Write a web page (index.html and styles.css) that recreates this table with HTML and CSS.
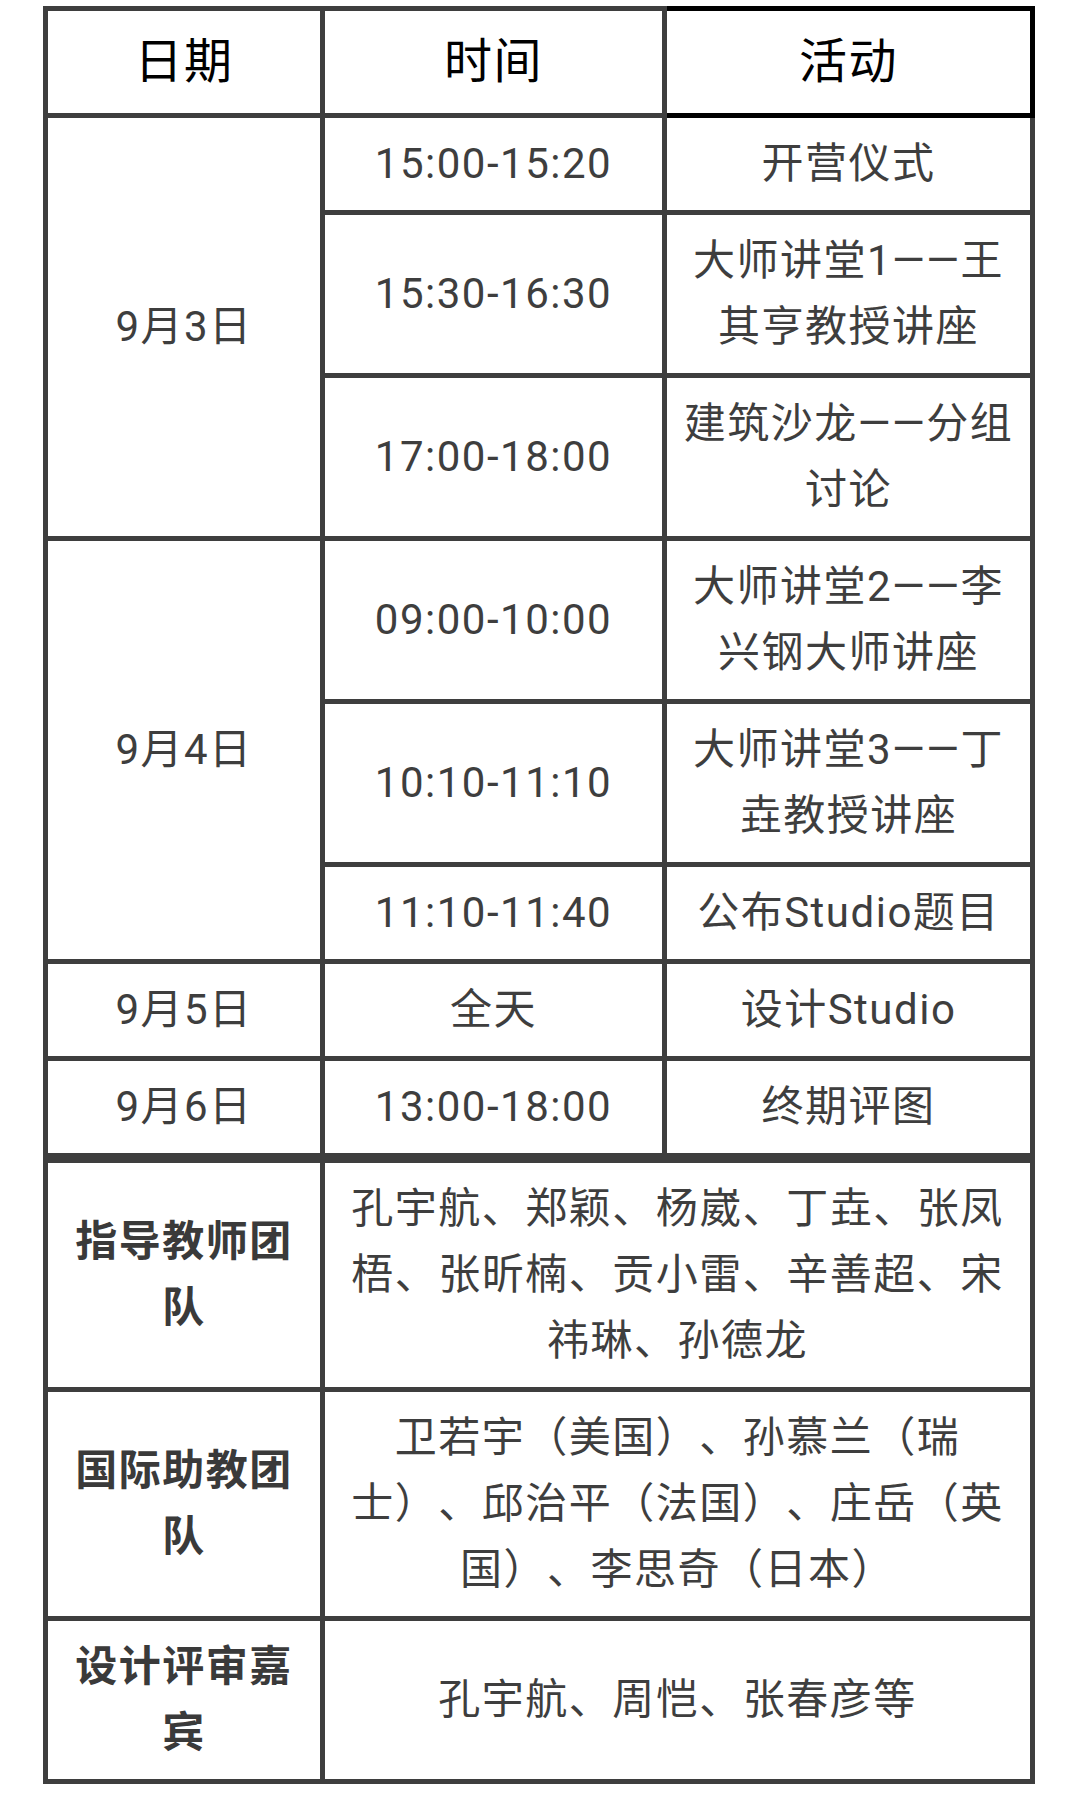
FILE: index.html
```html
<!DOCTYPE html>
<html lang="zh-CN">
<head>
<meta charset="utf-8">
<title>日程安排</title>
<link rel="stylesheet" href="styles.css">
</head>
<body>
<main class="page">
  <table class="grid">
    <colgroup><col class="c-date"><col class="c-time"><col class="c-act"></colgroup>
    <thead>
      <tr><th>日期</th><th>时间</th><th class="th-mark">活动</th></tr>
    </thead>
    <tbody>
      <tr><td rowspan="3">9月3日</td><td>15:00-15:20</td><td>开营仪式</td></tr>
      <tr><td>15:30-16:30</td><td>大师讲堂1——王其亨教授讲座</td></tr>
      <tr><td>17:00-18:00</td><td>建筑沙龙——分组讨论</td></tr>
      <tr><td rowspan="3">9月4日</td><td>09:00-10:00</td><td>大师讲堂2——李兴钢大师讲座</td></tr>
      <tr><td>10:10-11:10</td><td>大师讲堂3——丁垚教授讲座</td></tr>
      <tr><td>11:10-11:40</td><td>公布Studio题目</td></tr>
      <tr><td>9月5日</td><td>全天</td><td>设计Studio</td></tr>
      <tr><td>9月6日</td><td>13:00-18:00</td><td>终期评图</td></tr>
    </tbody>
  </table>
  <table class="grid">
    <colgroup><col class="c-date"><col class="c-time"><col class="c-act"></colgroup>
    <tbody>
      <tr><th class="label">指导教师团队</th><td colspan="2">孔宇航、郑颖、杨崴、丁垚、张凤梧、张昕楠、贡小雷、辛善超、宋祎琳、孙德龙</td></tr>
      <tr><th class="label">国际助教团队</th><td colspan="2">卫若宇（美国）、孙慕兰（瑞士）、邱治平（法国）、庄岳（英国）、李思奇（日本）</td></tr>
      <tr><th class="label">设计评审嘉宾</th><td colspan="2">孔宇航、周恺、张春彦等</td></tr>
    </tbody>
  </table>
</main>
</body>
</html>
```
FILE: styles.css
```css
html, body {
  margin: 0;
  padding: 0;
  background: #ffffff;
}

body {
  font-family: "Roboto", "Noto Sans CJK SC", sans-serif;
  color: #3e3e3e;
}

.page {
  padding: 6px 0 0 43px;
}

.grid {
  width: 992px;
  table-layout: fixed;
  border-collapse: separate;
  border-spacing: 5px;
  background: #3e3e3e;
}

.c-date { width: 272px; }
.c-time { width: 337px; }
.c-act  { width: 363px; }

.grid th,
.grid td {
  background: #ffffff;
  padding: 13px 10px;
  text-align: center;
  vertical-align: middle;
  font-size: 42px;
  line-height: 66px;
  letter-spacing: 1.5px;
  font-weight: 400;
  color: #3e3e3e;
  text-spacing-trim: space-all;
  text-autospace: no-autospace;
}

.grid thead th {
  font-size: 48px;
  line-height: 76px;
  color: #000000;
}

.grid .th-mark {
  box-shadow: 0 -5px 0 #000000, 0 5px 0 #000000, 5px -5px 0 #000000, 5px 5px 0 #000000;
}

.grid .label {
  font-weight: 700;
  color: #3a3a3a;
}
```
